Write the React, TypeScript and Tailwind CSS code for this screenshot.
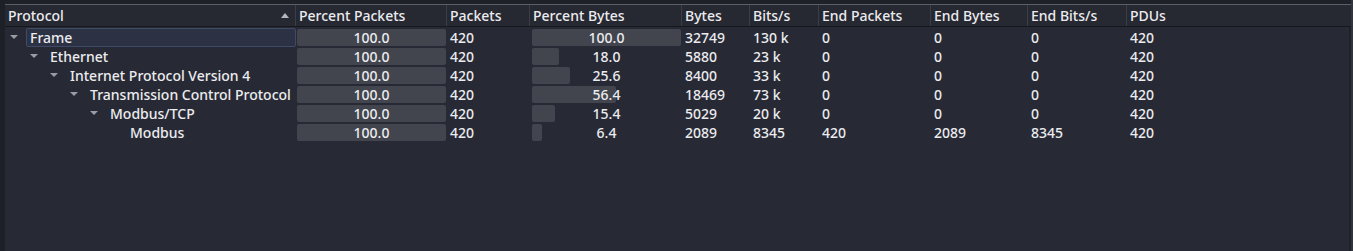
const cols = "grid grid-cols-[291px_151px_83px_152px_68px_69px_112px_97px_99px_1fr]";

type Row = {
  name: string;
  depth: number;
  open: boolean;
  pp: number;
  packets: string;
  pb: number;
  bytes: string;
  bits: string;
  endPackets: string;
  endBytes: string;
  endBits: string;
  pdus: string;
};

const rows: Row[] = [
  { name: "Frame", depth: 0, open: true, pp: 100, packets: "420", pb: 100, bytes: "32749", bits: "130 k", endPackets: "0", endBytes: "0", endBits: "0", pdus: "420" },
  { name: "Ethernet", depth: 1, open: true, pp: 100, packets: "420", pb: 18, bytes: "5880", bits: "23 k", endPackets: "0", endBytes: "0", endBits: "0", pdus: "420" },
  { name: "Internet Protocol Version 4", depth: 2, open: true, pp: 100, packets: "420", pb: 25.6, bytes: "8400", bits: "33 k", endPackets: "0", endBytes: "0", endBits: "0", pdus: "420" },
  { name: "Transmission Control Protocol", depth: 3, open: true, pp: 100, packets: "420", pb: 56.4, bytes: "18469", bits: "73 k", endPackets: "0", endBytes: "0", endBits: "0", pdus: "420" },
  { name: "Modbus/TCP", depth: 4, open: true, pp: 100, packets: "420", pb: 15.4, bytes: "5029", bits: "20 k", endPackets: "0", endBytes: "0", endBits: "0", pdus: "420" },
  { name: "Modbus", depth: 5, open: false, pp: 100, packets: "420", pb: 6.4, bytes: "2089", bits: "8345", endPackets: "420", endBytes: "2089", endBits: "8345", pdus: "420" },
];

const headers = ["Percent Packets", "Packets", "Percent Bytes", "Bytes", "Bits/s", "End Packets", "End Bytes", "End Bits/s", "PDUs"];

function Caret() {
  return (
    <svg width="8" height="5" viewBox="0 0 8 5" className="shrink-0">
      <path d="M0 0 H8 L4 4 Z" fill="#9a9ca3" />
    </svg>
  );
}

function Bar({ value }: { value: number }) {
  return (
    <div className="relative h-[17px] w-[149px] ml-px">
      <div className="absolute left-0 top-0 h-full rounded-[2px] bg-[#42454e]" style={{ width: `${(value / 100) * 149}px` }} />
      <span className="relative block text-center leading-[17px]">{value.toFixed(1)}</span>
    </div>
  );
}

export default function App() {
  return (
    <div
      className="flex h-[251px] w-[1353px] bg-[#1f2129] text-[14px] font-medium text-[#ececef] overflow-hidden"
      style={{ fontFamily: '"Noto Sans", "Open Sans", sans-serif' }}
    >
      <div className="w-[5px] shrink-0 bg-[#1e2028]" />
      <div className="flex flex-1 flex-col">
        <div className="h-[4px] bg-[#1f2129]" />
        <div className={`${cols} h-[23px] border-t border-[#5c5f68] border-b border-b-[#17181d] bg-[#262832]`}>
          <div className="flex items-center justify-between border-r border-[#3b3e47] pl-[3px] pr-[6px]">
            <span>Protocol</span>
            <svg width="8" height="5" viewBox="0 0 8 5">
              <path d="M0 5 L4 0 L8 5 Z" fill="#b4b6bb" />
            </svg>
          </div>
          {headers.map((h, i) => (
            <div key={h} className={`flex items-center pl-[3px] ${i < headers.length - 1 ? "border-r border-[#3b3e47]" : ""}`}>
              {h}
            </div>
          ))}
        </div>
        <div className="flex-1 bg-[#272a35] mr-[2px]">
          {rows.map((r, idx) => (
            <div key={r.name} className={`${cols} h-[19px] items-center`}>
              <div className="flex h-[19px] items-center" style={{ paddingLeft: `${5 + r.depth * 20}px` }}>
                <div className="flex w-[16px] justify-start">{r.open ? <Caret /> : null}</div>
                <span
                  className={
                    idx === 0
                      ? "flex h-[19px] flex-1 items-center rounded-[2px] border border-[#3d4b68] bg-[#2c3243] pl-[3px]"
                      : "pl-[4px] whitespace-nowrap"
                  }
                >
                  {r.name}
                </span>
              </div>
              <Bar value={r.pp} />
              <div className="pl-[3px]">{r.packets}</div>
              <div className="pl-px">
                <Bar value={r.pb} />
              </div>
              <div className="pl-[3px]">{r.bytes}</div>
              <div className="pl-[3px]">{r.bits}</div>
              <div className="pl-[3px]">{r.endPackets}</div>
              <div className="pl-[3px]">{r.endBytes}</div>
              <div className="pl-[3px]">{r.endBits}</div>
              <div className="pl-[3px]">{r.pdus}</div>
            </div>
          ))}
        </div>
      </div>
      <div className="w-[2px] shrink-0 bg-[#31343d]" />
    </div>
  );
}
